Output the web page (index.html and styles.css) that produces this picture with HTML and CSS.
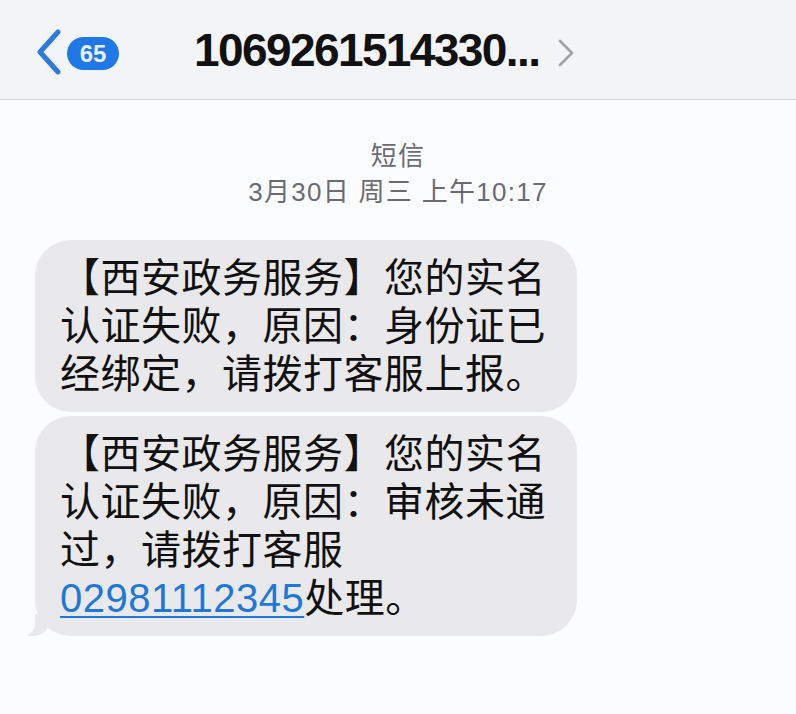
FILE: index.html
```html
<!DOCTYPE html>
<html lang="zh-CN">
<head>
  <meta charset="UTF-8" />
  <meta name="viewport" content="width=device-width, initial-scale=1.0"/>
  <title>短信</title>
  <link rel="stylesheet" href="styles.css">
</head>
<body>
  <header class="topbar">
    <svg class="back" width="26" height="46" viewBox="0 0 26 46" aria-hidden="true">
      <polyline points="22,3 4,23 22,43" fill="none" stroke="#2a7ae2" stroke-width="5" stroke-linecap="round" stroke-linejoin="round"/>
    </svg>
    <span class="badge">65</span>
    <h1 class="sender">1069261514330...</h1>
    <svg class="more" width="18" height="28" viewBox="0 0 18 28" aria-hidden="true">
      <polyline points="3,2 15,14 3,26" fill="none" stroke="#a3a3a8" stroke-width="2.6" stroke-linecap="round" stroke-linejoin="round"/>
    </svg>
  </header>

  <main class="thread">
    <div class="stamp">
      <div>短信</div>
      <div>3月30日 周三 上午10:17</div>
    </div>

    <div class="bubble">【西安政务服务】您的实名认证失败，原因：身份证已经绑定，请拨打客服上报。</div>
    <div class="bubble last">【西安政务服务】您的实名认证失败，原因：审核未通过，请拨打客服<a href="#">02981112345</a>处理。</div>
  </main>
</body>
</html>
```

FILE: styles.css
```css
body {
  margin: 0;
  background: #fbfcfe;
  font-family: 'Liberation Sans', 'Noto Sans CJK SC', sans-serif;
  color: #111;
}
.topbar {
  height: 100px;
  box-sizing: border-box;
  display: flex;
  align-items: center;
  padding-left: 36px;
  background: #f3f4f6;
  border-bottom: 1px solid #d2d2d6;
}
.back {
  margin-top: 4px;
}
.badge {
  margin-left: 5px;
  width: 52px;
  height: 33px;
  border-radius: 17px;
  background: #1f78e6;
  color: #e4eefc;
  font-size: 24px;
  font-weight: bold;
  line-height: 33px;
  text-align: center;
  margin-top: 8px;
}
.sender {
  margin: 0 0 0 75px;
  font-size: 46px;
  font-weight: bold;
  letter-spacing: -1.6px;
  color: #111;
}
.more {
  margin-left: 18px;
  margin-top: 6px;
}
.thread {
  padding: 38px 0 40px 35px;
}
.stamp {
  text-align: center;
  color: #6b6b70;
  font-size: 26px;
  line-height: 36px;
  letter-spacing: 1.3px;
  padding-right: 35px;
  margin-bottom: 30px;
}
.bubble {
  position: relative;
  width: fit-content;
  max-width: 542px;
  box-sizing: border-box;
  padding: 14px 31px 14px 25px;
  margin-bottom: 4px;
  background: #e9e9eb;
  border-radius: 36px;
  font-size: 40px;
  line-height: 48px;
  letter-spacing: 0.5px;
}
.bubble a {
  color: #1f78d6;
  text-decoration-thickness: 2px;
  text-underline-offset: 4px;
}
.bubble.last::before {
  content: "";
  position: absolute;
  bottom: 0;
  left: -8px;
  width: 24px;
  height: 22px;
  background: #e9e9eb;
  border-bottom-right-radius: 18px;
}
.bubble.last::after {
  content: "";
  position: absolute;
  bottom: 0;
  left: -12px;
  width: 12px;
  height: 22px;
  background: #fbfcfe;
  border-bottom-right-radius: 12px;
}
```
